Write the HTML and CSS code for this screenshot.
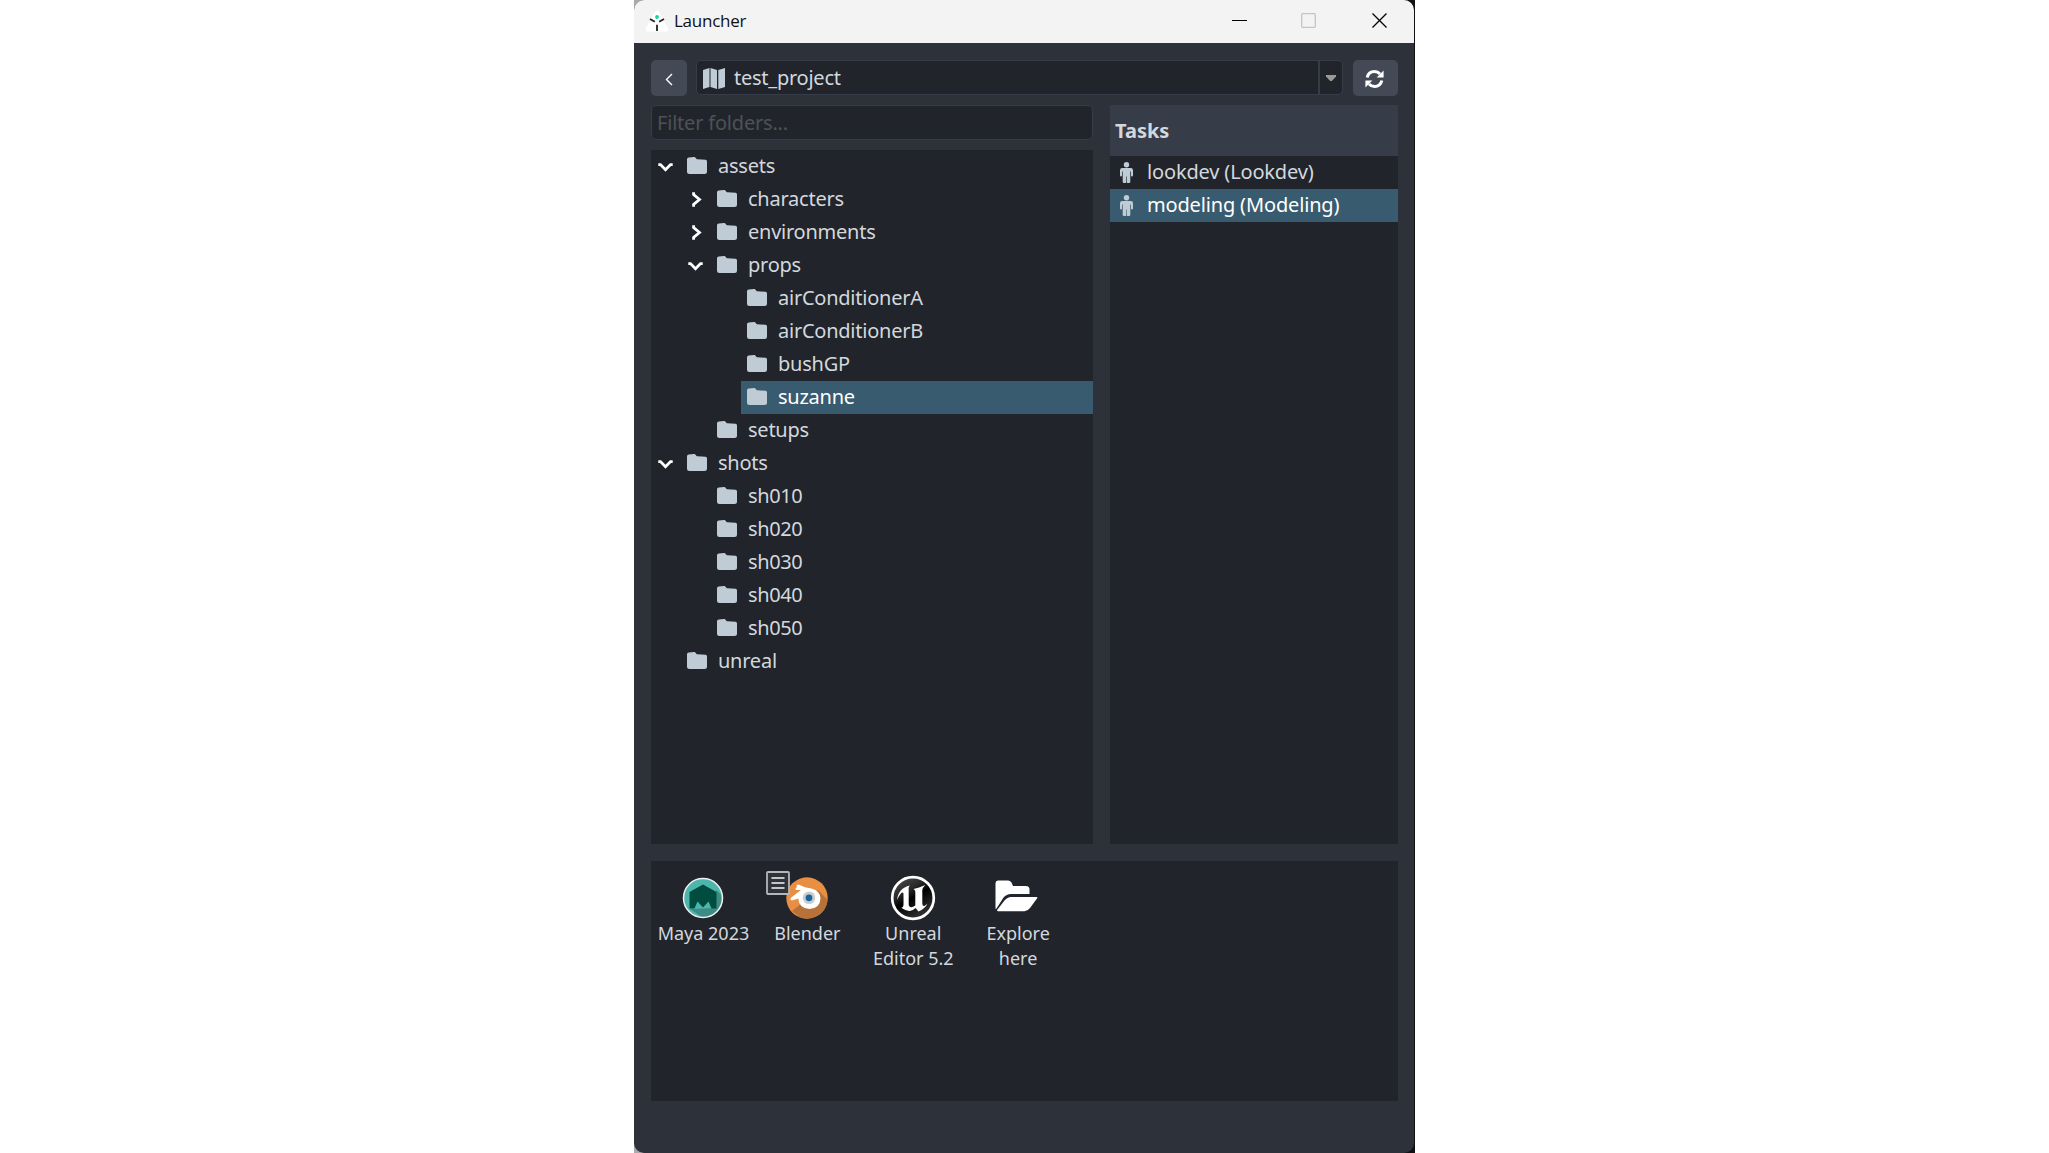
FILE: index.html
```html
<!DOCTYPE html>
<html lang="en">
<head>
<meta charset="utf-8">
<title>Launcher</title>
<link rel="stylesheet" href="styles.css">
</head>
<body>
<svg class="defs" width="0" height="0">
  <symbol id="folder" viewBox="0 0 20 17"><path d="M0 2.5C0 1.300 .8 .6 1.800 .500L7 0C8 0 8.600 .5 9.300 1.700C9.700 2.100 10 2.200 10.500 2.200L18.500 2.800Q20 3 20 4.500V14.500Q20 17 17.500 17H2.500Q0 17 0 14.500Z"/></symbol>
  <symbol id="down" viewBox="0 0 15 10"><path d="M.3 1.600H2.500L7.500 6.700L12.500 1.600H14.700" class="stroke"/></symbol>
  <symbol id="right" viewBox="0 0 10 15"><path d="M1.600 .3V2.500L7.500 7.500L1.600 12.500V14.700" class="stroke"/></symbol>
  <symbol id="person" viewBox="0 0 13 21"><circle cx="6.500" cy="2.700" r="2.700"/><path d="M2.300 6H10.700Q13 6 13 8.300V13.500Q13 14.500 12 14.500Q11 14.500 11 13.500V9.500H10.300V20Q10.300 21 9 21H7.400Q6.800 21 6.800 20.300V14.500H6.200V20.300Q6.200 21 5.600 21H4Q2.700 21 2.700 20V9.500H2V13.500Q2 14.500 1 14.500Q0 14.500 0 13.500V8.300Q0 6 2.300 6Z"/></symbol>
</svg>
<div class="backdrop">
<main class="window">
  <header class="titlebar">
    <svg class="logo" width="24" height="22" viewBox="0 0 24 22"><path d="M12 2.500L21.500 19.500H2.500Z" fill="#fff" stroke="#fff" stroke-width="4" stroke-linejoin="round"/><circle cx="12" cy="7" r="1.900" fill="#0cd6a0"/><path d="M5 9L9.800 11.700M19 9L14.200 11.700M12 14.800V21" stroke="#222" stroke-width="1.800" fill="none"/></svg>
    <span class="title">Launcher</span>
    <svg class="controls" width="156" height="16" viewBox="0 0 156 16"><path d="M0 7.500H15" stroke="#000"/><rect x="69.700" y=".7" width="13.600" height="13.600" rx="1" fill="none" stroke="#c4c4c4" stroke-width="1.300"/><path d="M140.500 .5L154.500 14.500M154.500 .5L140.500 14.500" stroke="#000" stroke-width="1.300"/></svg>
  </header>

  <div class="toolbar">
    <button class="btn back"><svg width="8" height="13" viewBox="0 0 8 13"><path d="M7 1L1.500 6.500L7 12" fill="none" stroke="#fff" stroke-width="1.400"/></svg></button>
    <div class="combo">
      <svg class="map" width="22" height="21" viewBox="0 0 22 21"><path d="M0 2L6.500 0V19L0 21ZM7.500 0L14 2V21L7.500 19ZM15.300 2L22 0V19L15.300 21Z" fill="#bfccd6"/></svg>
      <span>test_project</span>
      <div class="drop"><svg width="10" height="6" viewBox="0 0 10 6"><path d="M0 0H10V1.500L5.800 6H4.200L0 1.500Z" fill="#9b9a99"/></svg></div>
    </div>
    <button class="btn refresh"><svg width="19" height="18" viewBox="0 0 19 18"><path d="M2.200 7.500C3 3.800 6 1.600 9.500 1.600C11.800 1.600 13.700 2.500 15 4M16.800 10.500C16 14.200 13 16.400 9.500 16.400C7.200 16.400 5.300 15.500 4 14" fill="none" stroke="#fff" stroke-width="3"/><path d="M18.600 .5V7.500H11.600ZM.4 17.500V10.500H7.400Z" fill="#fff"/></svg></button>
  </div>

  <div class="columns">
    <section class="folders">
      <input class="filter" placeholder="Filter folders...">
      <ul class="tree">
        <li><svg class="arrow"><use href="#down" width="15" height="10" y="3"/></svg><div class="item"><svg class="folder"><use href="#folder"/></svg>assets</div></li>
        <li class="l1"><svg class="arrow side"><use href="#right" width="10" height="15" x="4"/></svg><div class="item"><svg class="folder"><use href="#folder"/></svg>characters</div></li>
        <li class="l1"><svg class="arrow side"><use href="#right" width="10" height="15" x="4"/></svg><div class="item"><svg class="folder"><use href="#folder"/></svg>environments</div></li>
        <li class="l1"><svg class="arrow"><use href="#down" width="15" height="10" y="3"/></svg><div class="item"><svg class="folder"><use href="#folder"/></svg>props</div></li>
        <li class="l2"><svg class="arrow"></svg><div class="item"><svg class="folder"><use href="#folder"/></svg>airConditionerA</div></li>
        <li class="l2"><svg class="arrow"></svg><div class="item"><svg class="folder"><use href="#folder"/></svg>airConditionerB</div></li>
        <li class="l2"><svg class="arrow"></svg><div class="item"><svg class="folder"><use href="#folder"/></svg>bushGP</div></li>
        <li class="l2"><svg class="arrow"></svg><div class="item selected"><svg class="folder"><use href="#folder"/></svg>suzanne</div></li>
        <li class="l1"><svg class="arrow"></svg><div class="item"><svg class="folder"><use href="#folder"/></svg>setups</div></li>
        <li><svg class="arrow"><use href="#down" width="15" height="10" y="3"/></svg><div class="item"><svg class="folder"><use href="#folder"/></svg>shots</div></li>
        <li class="l1 shot"><svg class="arrow"></svg><div class="item"><svg class="folder"><use href="#folder"/></svg>sh010</div></li>
        <li class="l1 shot"><svg class="arrow"></svg><div class="item"><svg class="folder"><use href="#folder"/></svg>sh020</div></li>
        <li class="l1 shot"><svg class="arrow"></svg><div class="item"><svg class="folder"><use href="#folder"/></svg>sh030</div></li>
        <li class="l1 shot"><svg class="arrow"></svg><div class="item"><svg class="folder"><use href="#folder"/></svg>sh040</div></li>
        <li class="l1 shot"><svg class="arrow"></svg><div class="item"><svg class="folder"><use href="#folder"/></svg>sh050</div></li>
        <li><svg class="arrow"></svg><div class="item"><svg class="folder"><use href="#folder"/></svg>unreal</div></li>
      </ul>
    </section>
    <section class="tasks">
      <h2>Tasks</h2>
      <div class="task"><svg class="person"><use href="#person"/></svg>lookdev (Lookdev)</div>
      <div class="task selected"><svg class="person"><use href="#person"/></svg>modeling (Modeling)</div>
    </section>
  </div>

  <section class="apps">
    <div class="app">
      <svg width="46" height="46" viewBox="0 0 46 46"><circle cx="23" cy="23" r="19.500" fill="#4db6ac"/><path d="M36 15L41.500 20Q43 27 38 35Q31 43 22 42L10 34L36 33Z" fill="#3c8c85"/><path d="M9.500 17L23 9.500L36.500 17V33.500H31.500L28.500 26.500L23 32.500L17.500 26.500L14.500 33.500H9.500Z" fill="#004d40"/><circle cx="23" cy="23" r="19.500" fill="none" stroke="#eef1f1" stroke-width="1.500"/></svg>
      <span>Maya 2023</span>
    </div>
    <div class="app blender">
      <svg class="menu" width="24" height="24" viewBox="0 0 24 24"><rect x="1" y="1" width="22" height="22" rx="1" fill="#30343a" stroke="#b4b6b8" stroke-width="1.800"/><path d="M5.500 7H18.500M5.500 12H18.500M5.500 17H18.500" stroke="#c4c6c8" stroke-width="2"/></svg>
      <svg width="46" height="46" viewBox="0 0 46 46"><circle cx="23" cy="23" r="20.700" fill="#e88f43"/><path d="M34 15L43.600 25Q42 36 33 41Q25 45 16 42.500L8 36L18 28Z" fill="#b87138"/><path d="M13 12Q11.500 9.500 14.500 9.500L21 12.200L27.500 13.500Q36.500 16 36.500 23.500Q36 33.500 25.500 34Q15 33.500 14.300 23.500L8 25.500Q5.500 25 7 22.800L17 15H11.800Q10.800 13 13 12Z" fill="#fff"/><circle cx="25" cy="22.800" r="6.300" fill="#ccc"/><circle cx="25" cy="22.800" r="3.400" fill="#1566a0"/></svg>
      <span>Blender</span>
    </div>
    <div class="app">
      <svg width="46" height="46" viewBox="0 0 46 46"><defs><linearGradient id="g" x1="0" y1="0" x2=".6" y2="1"><stop offset="0" stop-color="#555"/><stop offset=".4" stop-color="#292929"/><stop offset=".58" stop-color="#000"/><stop offset="1" stop-color="#333"/></linearGradient></defs><circle cx="23" cy="23" r="20.800" fill="url(#g)" stroke="#fff" stroke-width="2.700"/><path d="M7 25C8 17 12 12.500 20 10.500C18.500 12 18.500 13 18.700 14.500V30Q19.500 32.500 21.500 32.200Q24 31.800 25.300 30.500V16.500Q25 14.500 23.500 14L29 12.500L35.300 10Q32.300 13 32.300 15V28.500Q32.500 31.500 34.300 31Q36 30 37.500 28.500C36 32 33 34.500 28.500 36.500L25.500 33Q22 36.500 19 36Q15.500 35.500 11.500 33Q13.500 32 13.500 30V18.500Q12.500 16.500 10.500 19C8.800 21 8 23 7 25Z" fill="#fff"/></svg>
      <span>Unreal<br>Editor 5.2</span>
    </div>
    <div class="app">
      <svg class="explore" width="46" height="46" viewBox="0 0 46 46"><path d="M1.500 34V8.500Q1.500 5.500 4.500 5.500H14Q16 5.500 17.500 7.500L19 11H32Q35.500 11 35.500 14.500V19H17Q12.500 19 9.500 22.500L2.500 33.500Z" fill="#fff"/><path d="M17 22H42.500Q44 22.200 43 23.500L36 33Q33.500 36.300 30.500 36.300H4Q2.500 36 3.500 34.500L10.500 25.500Q13.500 22 17 22Z" fill="#fff"/></svg>
      <span>Explore<br>here</span>
    </div>
  </section>
</main>
</div>
</body>
</html>
```
FILE: styles.css
```css
* { box-sizing: border-box; }
body { margin: 0; background: #fff; font-family: "Noto Sans", "Open Sans", sans-serif; }
.defs { position: absolute; }
.stroke { fill: none; stroke: #fff; stroke-width: 2.8; }
.backdrop { width: 781px; margin-left: 634px; padding-right: 1px; background: linear-gradient(90deg, #aaa 50%, #111 50%); }
.window {
  height: 1153px; padding: 0 16px 0 17px; display: flex; flex-direction: column;
  background: #2c313a; border-radius: 10px; overflow: hidden; color: #d3d8de; font-size: 20px;
}
.titlebar {
  height: 43px; margin: 0 -16px 0 -17px; padding: 0 26px 2px 11px; flex: none;
  display: flex; align-items: center; background: #f3f3f3; color: #111;
}
.title { margin-left: 5px; font-size: 17px; letter-spacing: -.25px; font-family: "Open Sans", sans-serif; }
.controls { margin-left: auto; }
.toolbar { display: flex; gap: 9px; height: 36px; margin-top: 17px; }
.btn {
  display: flex; align-items: center; justify-content: center; padding: 0;
  border: 0; border-radius: 5px; background: #434a56;
}
.back { width: 36px; padding: 3px 0 0; }
.refresh { width: 45px; margin-left: 1px; padding: 1px 2px 0 0; }
.combo {
  flex: 1; height: 35px; display: flex; align-items: center; padding-left: 6px;
  border: 1px solid #373d48; border-radius: 5px; background: #21252b; line-height: 32px; letter-spacing: -.25px;
}
.combo span { margin: 0 0 0 9px; }
.map { margin-top: 1px; }
.drop {
  width: 24px; height: 100%; margin-left: auto; border-left: 2px solid #373d48;
  display: flex; align-items: center; justify-content: center;
}
.columns { display: grid; grid-template-columns: 442px 288px; gap: 17px; height: 739px; margin-top: 9px; }
.folders { display: flex; flex-direction: column; gap: 10px; }
.filter {
  height: 35px; padding: 0 5px 1px; border: 1px solid #373d48; border-radius: 5px;
  background: #21252b; font: inherit; letter-spacing: -.2px;
}
.filter::placeholder { color: #4d5257; opacity: 1; }
.tree { flex: 1; margin: 0; padding: 0; list-style: none; background: #21252b; letter-spacing: -.24px; }
.tree li { display: flex; align-items: center; height: 33px; padding-left: 7px; }
.tree .l1 { padding-left: 37px; }
.tree .l2 { padding-left: 67px; }
.tree .shot { letter-spacing: -.4px; }
.arrow { width: 15px; height: 15px; margin-top: 2px; flex: none; }
.arrow.side { margin-top: 0; }
.item { flex: 1; height: 33px; margin-left: 8px; padding: 0 0 2px 6px; line-height: 31px; display: flex; align-items: center; }
.item.selected, .task.selected { background: #395b6f; color: #fff; }
.folder { width: 20px; height: 17px; margin: 0 11px 0 0; fill: #bfccd6; }
.tasks { background: #21252b; }
.tasks h2 { margin: 0; height: 51px; padding: 1px 5px 0; background: #373d48; font-size: 20px; line-height: 49px; }
.task { display: flex; align-items: center; height: 33px; padding: 0 0 2px 10px; line-height: 31px; letter-spacing: -.16px; }
.person { width: 13px; height: 21px; margin: 2px 14px 0 0; fill: #bfccd6; }
.apps {
  height: 240px; margin-top: 17px; padding-top: 14px; flex: none; background: #21252b;
  display: grid; grid-template-columns: repeat(4, 104.9px); align-items: start;
}
.app { display: flex; flex-direction: column; align-items: center; font-size: 18px; line-height: 25px; text-align: center; }
.blender { position: relative; }
.blender > svg:not(.menu) { margin-right: 3px; }
.blender span { margin-right: 2px; }
.menu { position: absolute; left: 10px; top: -4px; z-index: 1; }
.explore { margin-right: 2px; }
```
